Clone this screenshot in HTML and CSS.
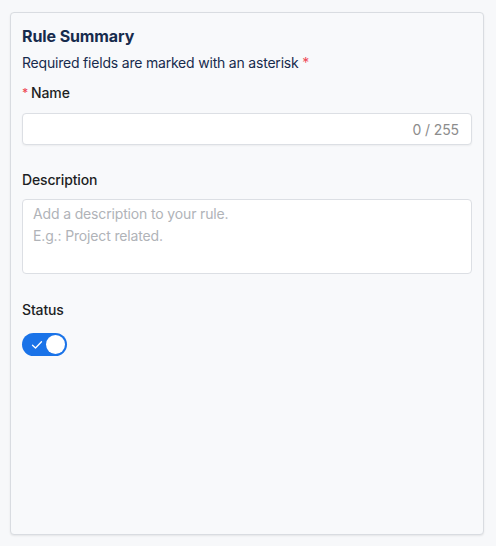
FILE: index.html
```html
<!DOCTYPE html>
<html lang="en">
<head>
<meta charset="utf-8">
<title>Rule Summary</title>
<link rel="stylesheet" href="styles.css">
</head>
<body>
<section class="card">
  <h2 class="title">Rule Summary</h2>
  <p class="hint">Required fields are marked with an asterisk <span class="req">*</span></p>

  <label class="label label-name"><span class="req req-pre">*</span>Name</label>
  <div class="input">
    <span class="counter">0 / 255</span>
  </div>

  <label class="label label-desc">Description</label>
  <div class="textarea">
    <span class="ph">Add a description to your rule.</span>
    <span class="ph">E.g.: Project related.</span>
  </div>

  <label class="label label-status">Status</label>
  <div class="toggle">
    <svg class="check" width="12" height="10" viewBox="0 0 12 10"><path d="M1.5 5.2 L4.5 8 L10.5 1.8" fill="none" stroke="#fff" stroke-width="1.3" stroke-linecap="round" stroke-linejoin="round"/></svg>
    <span class="knob"></span>
  </div>
</section>
</body>
</html>
```

FILE: styles.css
```css
html, body {
  margin: 0;
  padding: 0;
  background: #f7f8fa;
  font-family: Inter, "Noto Sans", sans-serif;
}
body {
  padding: 12px 12px 11px 10px;
  height: 546px;
  box-sizing: border-box;
}
.card {
  box-sizing: border-box;
  height: 523px;
  width: 474px;
  background: #f8f9fb;
  border: 1px solid #d9dce1;
  border-radius: 4px;
  box-shadow: 0 1px 2px rgba(0, 0, 0, 0.08);
  padding: 13px 11px;
  display: flex;
  flex-direction: column;
  align-items: flex-start;
}
.title {
  margin: 0;
  font-size: 16px;
  line-height: 20px;
  font-weight: 700;
  color: #172b4d;
  letter-spacing: -0.1px;
}
.hint {
  margin: 7px 0 0;
  font-size: 14px;
  line-height: 20px;
  color: #172b4d;
  letter-spacing: -0.2px;
}
.req {
  color: #ef4a56;
}
.label {
  font-size: 14px;
  line-height: 20px;
  font-weight: 500;
  color: #1d1f24;
  letter-spacing: -0.15px;
}
.label-name { margin-top: 10px; }
.req-pre {
  font-size: 12px;
  margin-right: 3px;
  vertical-align: 1px;
}
.label-desc { margin-top: 25px; }
.label-status { margin-top: 26px; }
.input {
  margin-top: 10px;
  box-sizing: border-box;
  width: 450px;
  height: 32px;
  background: #fff;
  border: 1px solid #dcdfe4;
  border-radius: 4px;
  box-shadow: 0 1px 2px rgba(0, 0, 0, 0.05);
  display: flex;
  align-items: center;
  justify-content: flex-end;
  padding: 0 12px;
}
.counter {
  font-size: 14px;
  color: #8c8c8c;
  letter-spacing: -0.1px;
}
.textarea {
  margin-top: 9px;
  box-sizing: border-box;
  width: 450px;
  height: 75px;
  background: #fff;
  border: 1px solid #dcdfe4;
  border-radius: 4px;
  padding: 3px 10px;
  display: flex;
  flex-direction: column;
}
.ph {
  font-size: 14px;
  line-height: 22px;
  color: #b0b3b8;
  letter-spacing: -0.15px;
}
.toggle {
  margin-top: 13px;
  box-sizing: border-box;
  width: 45px;
  height: 23px;
  border-radius: 12px;
  background: #1a73e8;
  display: flex;
  align-items: center;
  justify-content: space-between;
  padding: 0 2px 0 9px;
}
.check { display: block; }
.knob {
  width: 19px;
  height: 19px;
  border-radius: 50%;
  background: #fff;
}
```
